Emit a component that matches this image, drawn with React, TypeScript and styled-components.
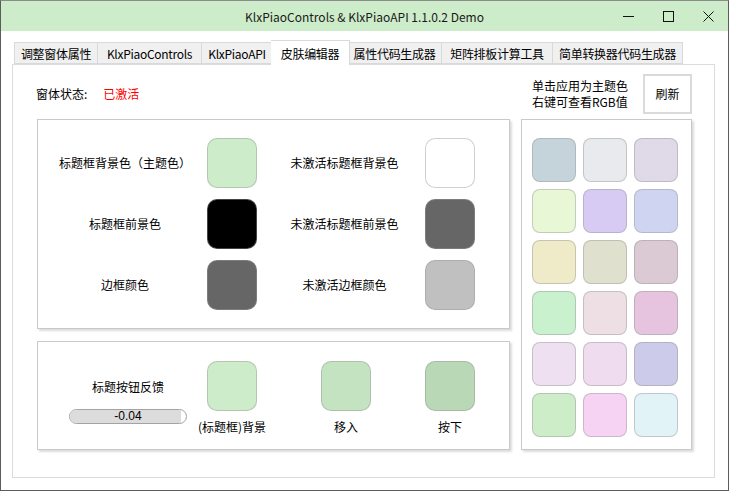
import React from "react";
import styled, { createGlobalStyle } from "styled-components";

const GlobalStyle = createGlobalStyle`
    html, body {
        margin: 0;
        padding: 0;
        background: #ffffff;
    }
    body {
        font-family: "Noto Sans CJK SC", "Noto Sans", sans-serif;
        font-size: 12px;
        color: #000;
    }
`;

const Window = styled.div`
    width: 729px;
    height: 491px;
    box-sizing: border-box;
    border: 1px solid #5c5c5c;
    border-top-color: #8c8c8c;
    background: #ffffff;
    display: flex;
    flex-direction: column;
`;

const TitleBar = styled.div`
    height: 30px;
    flex: none;
    background: #cdecc9;
    display: grid;
    grid-template-columns: 120px 1fr 120px;
    align-items: center;
`;

const Title = styled.div`
    text-align: center;
    font-size: 12px;
    color: #1a1a1a;
`;

const Controls = styled.div`
    display: flex;
    justify-content: flex-end;
    height: 100%;
`;

const ControlButton = styled.div`
    width: 40px;
    display: flex;
    align-items: center;
    justify-content: center;
`;

const Body = styled.div`
    flex: 1;
    display: flex;
    flex-direction: column;
    padding: 9px 13px 12px 11px;
    min-height: 0;
`;

const TabStrip = styled.div`
    display: flex;
    height: 24px;
    padding-left: 2px;
    align-items: flex-start;
    flex: none;
`;

const Tab = styled.div<{ $width: number; $active?: boolean }>`
    box-sizing: border-box;
    width: ${(p) => (p.$active ? p.$width + 4 : p.$width)}px;
    height: ${(p) => (p.$active ? 25 : 22)}px;
    margin: ${(p) => (p.$active ? "0 -2px" : "2px 0 0 0")};
    border: 1px solid #d9d9d9;
    border-bottom: ${(p) => (p.$active ? "none" : "1px solid #d9d9d9")};
    background: ${(p) => (p.$active ? "#ffffff" : "#f0f0f0")};
    position: relative;
    z-index: ${(p) => (p.$active ? 2 : 1)};
    display: flex;
    align-items: center;
    justify-content: center;
    white-space: nowrap;
    font-size: 12px;
    letter-spacing: -0.3px;
    & + & {
        border-left: ${(p) => (p.$active ? "1px solid #d9d9d9" : "none")};
    }
`;

const Panel = styled.div`
    flex: 1;
    box-sizing: border-box;
    border: 1px solid #dcdcdc;
    background: #ffffff;
    padding: 9px 22px 0 23px;
    position: relative;
    z-index: 1;
`;

const Header = styled.div`
    height: 39px;
    display: flex;
    justify-content: space-between;
    align-items: center;
    margin-bottom: 6px;
`;

const Status = styled.div`
    display: flex;
    gap: 16px;
`;

const Active = styled.span`
    color: #ff0000;
`;

const HeaderRight = styled.div`
    display: flex;
    align-items: center;
    gap: 15px;
`;

const Hint = styled.div`
    line-height: 16px;
`;

const RefreshButton = styled.button`
    width: 49px;
    height: 40px;
    box-sizing: border-box;
    border: 2px solid #dadada;
    background: #ffffff;
    font-family: inherit;
    font-size: 12px;
    color: #000;
    padding: 0;
`;

const Main = styled.div`
    display: flex;
    gap: 11px;
    padding-left: 1px;
`;

const LeftColumn = styled.div`
    width: 473px;
    display: flex;
    flex-direction: column;
    gap: 12px;
`;

const Card = styled.div<{ $height: number }>`
    box-sizing: border-box;
    height: ${(p) => p.$height}px;
    border: 1px solid #c9c9c9;
    background: #ffffff;
    box-shadow: 2px 2px 2px rgba(0, 0, 0, 0.14);
`;

const ColorGrid = styled(Card)`
    display: grid;
    grid-template-columns: 164px 50px 168px 50px;
    grid-auto-rows: 50px;
    row-gap: 11px;
    padding: 18px 0 0 5px;
    align-items: center;
`;

const Label = styled.div<{ $shift?: number }>`
    text-align: center;
    padding-left: ${(p) => p.$shift || 0}px;
    white-space: nowrap;
    line-height: 16px;
`;

const Swatch = styled.div<{ $color: string; $size?: number }>`
    box-sizing: border-box;
    width: ${(p) => p.$size || 50}px;
    height: ${(p) => p.$size || 50}px;
    border-radius: ${(p) => ((p.$size || 50) > 46 ? 10 : 8)}px;
    border: 1px solid rgba(150, 150, 150, 0.45);
    background: ${(p) => p.$color};
`;

const FeedbackCard = styled(Card)`
    display: grid;
    grid-template-columns: 118px 90px 138px 70px;
    padding: 19px 0 0 31px;
    align-items: start;
`;

const FeedbackLeft = styled.div`
    margin-top: 18px;
    display: flex;
    flex-direction: column;
    align-items: center;
    gap: 14px;
`;

const Bar = styled.div`
    width: 118px;
    height: 15px;
    box-sizing: border-box;
    border: 1px solid #a3a3a3;
    border-radius: 8px;
    background: #ffffff;
    position: relative;
    overflow: hidden;
`;

const BarFill = styled.div`
    position: absolute;
    left: 0;
    top: 0;
    bottom: 0;
    background: #dcdcdc;
`;

const BarText = styled.div`
    position: relative;
    font-family: "Liberation Sans", Arial, sans-serif;
    font-size: 12px;
    line-height: 13px;
    text-align: center;
`;

const SwatchColumn = styled.div`
    display: flex;
    flex-direction: column;
    align-items: center;
    gap: 8px;
`;

const Palette = styled(Card)`
    width: 171px;
    display: grid;
    grid-template-columns: repeat(3, 44px);
    grid-auto-rows: 44px;
    gap: 7px;
    padding: 18px 0 0 10px;
    align-content: start;
`;

const tabs = [
    { name: "调整窗体属性", width: 84 },
    { name: "KlxPiaoControls", width: 104 },
    { name: "KlxPiaoAPI", width: 71 },
    { name: "皮肤编辑器", width: 75, active: true },
    { name: "属性代码生成器", width: 94 },
    { name: "矩阵排板计算工具", width: 111 },
    { name: "简单转换器代码生成器", width: 130 },
];

const colorRows = [
    ["标题框背景色（主题色）", "#cdecc9", "未激活标题框背景色", "#ffffff"],
    ["标题框前景色", "#000000", "未激活标题框前景色", "#666666"],
    ["边框颜色", "#666666", "未激活边框颜色", "#c0c0c0"],
];

const feedback = [
    { label: "(标题框)背景", color: "#cdecc9" },
    { label: "移入", color: "#c4e4c1" },
    { label: "按下", color: "#b9d8b6" },
];

const palette = [
    "#c4d4da", "#e8eaee", "#e0d9e8",
    "#e8f7d5", "#d8cbf3", "#cfd5f0",
    "#efebc8", "#e0e0cf", "#dbc9d3",
    "#c9f1cd", "#eedfe5", "#e6c4df",
    "#eee0f0", "#f0dcef", "#cdcbea",
    "#cdedc9", "#f6d3f3", "#e1f3f7",
];

const WindowControls = () => (
    <Controls>
        <ControlButton>
            <svg width="11" height="11" viewBox="0 0 11 11">
                <line x1="0" y1="5.5" x2="11" y2="5.5" stroke="#111" strokeWidth="1" />
            </svg>
        </ControlButton>
        <ControlButton>
            <svg width="11" height="11" viewBox="0 0 11 11">
                <rect x="0.5" y="0.5" width="10" height="10" fill="none" stroke="#111" strokeWidth="1" />
            </svg>
        </ControlButton>
        <ControlButton>
            <svg width="11" height="11" viewBox="0 0 11 11">
                <path d="M0.5 0.5 L10.5 10.5 M10.5 0.5 L0.5 10.5" stroke="#111" strokeWidth="1" />
            </svg>
        </ControlButton>
    </Controls>
);

const App = () => {
    const feedbackValue = 0.96;

    return (
        <>
            <GlobalStyle />
            <Window>
                <TitleBar>
                    <div />
                    <Title>KlxPiaoControls &amp; KlxPiaoAPI 1.1.0.2 Demo</Title>
                    <WindowControls />
                </TitleBar>
                <Body>
                    <TabStrip>
                        {tabs.map((t) => (
                            <Tab key={t.name} $width={t.width} $active={t.active}>
                                {t.name}
                            </Tab>
                        ))}
                    </TabStrip>
                    <Panel>
                        <Header>
                            <Status>
                                <span>窗体状态:</span>
                                <Active>已激活</Active>
                            </Status>
                            <HeaderRight>
                                <Hint>
                                    单击应用为主题色
                                    <br />
                                    右键可查看RGB值
                                </Hint>
                                <RefreshButton>刷新</RefreshButton>
                            </HeaderRight>
                        </Header>
                        <Main>
                            <LeftColumn>
                                <ColorGrid $height={210}>
                                    {colorRows.map(([l1, c1, l2, c2]) => (
                                        <React.Fragment key={l1}>
                                            <Label>{l1}</Label>
                                            <Swatch $color={c1} />
                                            <Label $shift={7}>{l2}</Label>
                                            <Swatch $color={c2} />
                                        </React.Fragment>
                                    ))}
                                </ColorGrid>
                                <FeedbackCard $height={109}>
                                    <FeedbackLeft>
                                        <Label>标题按钮反馈</Label>
                                        <Bar>
                                            <BarFill style={{ width: `${feedbackValue * 100}%` }} />
                                            <BarText>-0.04</BarText>
                                        </Bar>
                                    </FeedbackLeft>
                                    {feedback.map((f) => (
                                        <SwatchColumn key={f.label}>
                                            <Swatch $color={f.color} />
                                            <Label>{f.label}</Label>
                                        </SwatchColumn>
                                    ))}
                                </FeedbackCard>
                            </LeftColumn>
                            <Palette $height={331}>
                                {palette.map((c, i) => (
                                    <Swatch key={i} $color={c} $size={44} />
                                ))}
                            </Palette>
                        </Main>
                    </Panel>
                </Body>
            </Window>
        </>
    );
};

export default App;
